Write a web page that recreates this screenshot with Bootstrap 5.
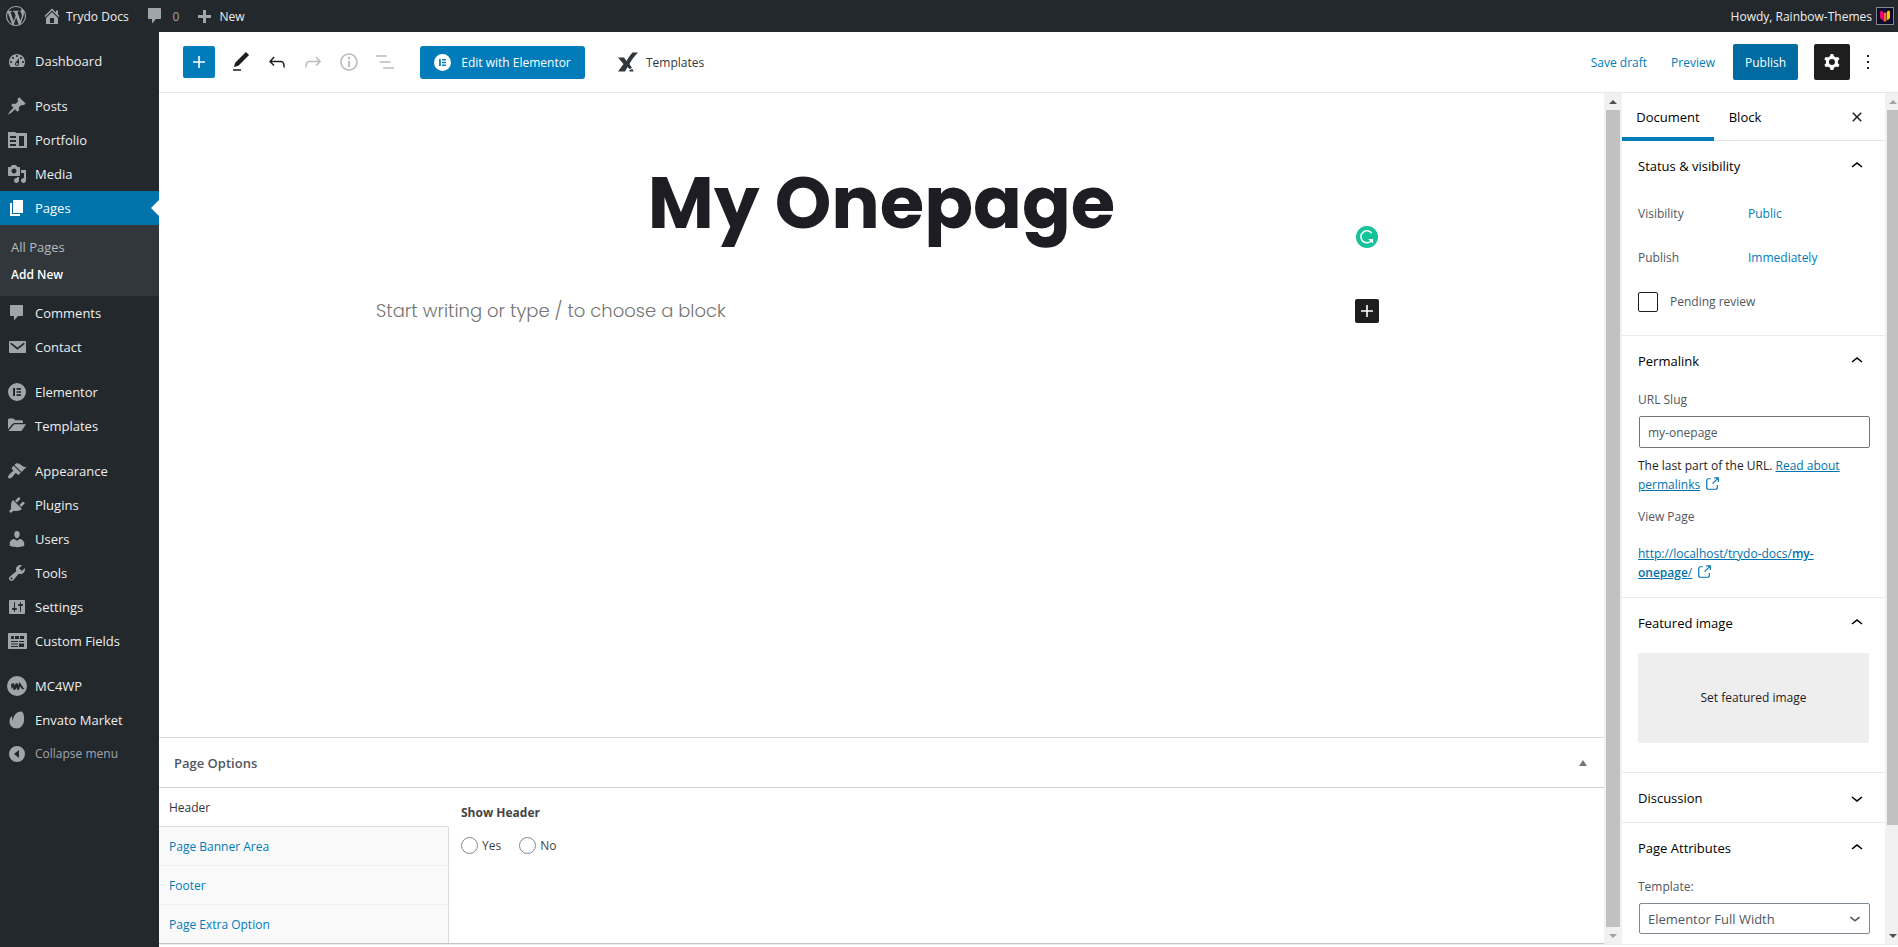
<!DOCTYPE html>
<html lang="en">
<head>
<meta charset="utf-8">
<meta name="viewport" content="width=device-width, initial-scale=1">
<title>Add New Page ‹ Trydo Docs — WordPress</title>
<link href="https://cdn.jsdelivr.net/npm/bootstrap@5.3.0/dist/css/bootstrap.min.css" rel="stylesheet">
<style>
  body { font-family: "Open Sans", "Noto Sans", sans-serif; font-size: 12px; line-height: 18px; color: #1e1e1e; background: #fff; }
  svg { display: block; flex: none; fill: currentColor; }
  a { color: #007cba; text-decoration: none; }
  button { font: inherit; }

  .adminbar { height: 32px; background: #23282d; color: #eee; padding: 0 4px 0 6px; }
  .adminbar a { color: #eee; }
  .adminbar svg { color: #a0a5aa; }
  .adminbar .count { color: #a0a5aa; }
  .adminbar .label, .topbar .label { padding-top: 2px; }
  .avatar { border: 1px solid #82878c; background: #0d0d2b; }

  .adminmenu { width: 159px; background: #23282d; padding-top: 12px; font-size: 13px; }
  .menu-link { display: flex; align-items: center; height: 34px; padding-left: 7px; gap: 8px; color: #eee; }
  .menu-link svg { color: #a0a5aa; }
  .menu-gap { margin-top: 11px; }
  .menu-link.current { background: #0073aa; color: #fff; position: relative; }
  .menu-link.current svg { color: #fff; }
  .menu-link.current::after { content: ""; position: absolute; right: 0; top: 9px; border: 8px solid transparent; border-left: 0; border-right-color: #fff; }
  .submenu { background: #32373c; padding: 8px 0 7px 11px; }
  .submenu a { display: block; line-height: 28px; color: #b4b9be; }
  .submenu a.current { color: #fff; font-weight: 600; font-size: 12px; }
  .collapse-btn { background: none; border: 0; width: 100%; color: #a0a5aa; font-size: 12px; }

  .topbar { height: 61px; border-bottom: 1px solid #e7e8e9; padding: 0 21px 0 24px; }
  .icon-btn { background: none; border: 0; padding: 0; width: 36px; height: 36px; display: flex; align-items: center; justify-content: center; color: #1e1e1e; }
  .icon-btn:disabled { color: #bbb; }
  .btn-flat { border: 0; border-radius: 2px; color: #fff; background: #007cba; display: flex; align-items: center; justify-content: center; }
  .inserter { width: 32px; height: 32px; padding: 0; }
  .elementor-btn { height: 33px; width: 165px; padding: 0; gap: 10px; border-radius: 3px; margin-left: 17px; }
  .templates-btn { background: none; border: 0; padding: 0; gap: 8px; color: #32373c; margin-left: 33px; }
  .text-btn { background: none; border: 0; padding: 0; color: #007cba; }
  .preview { margin-right: 18px; }
  .publish-btn { height: 36px; width: 65px; background: #006ba1; padding: 0; font-weight: 500; }
  .cog-btn { width: 36px; height: 36px; background: #1e1e1e; padding: 0; }
  .more-btn { width: 18px; margin-left: 9px; }

  .canvas-col { width: 1011px; max-width: 90%; padding-right: 8px; }
  .page-title { font-family: Poppins, Inter, sans-serif; font-weight: 700; font-size: 72px; line-height: 86px; color: #1f1d24; margin: 67px 0 0 8px; text-align: center; }
  .prompt-row { margin-top: 53px; height: 24px; }
  .prompt-text { font-family: Poppins, Inter, sans-serif; font-weight: 300; font-size: 18px; line-height: 24px; color: #757575; }
  .block-add { width: 24px; height: 24px; background: #1e1e1e; padding: 0; }
  .grammarly { position: absolute; right: 1px; bottom: -2px; }

  .metabox { border-top: 1px solid #d9dbdd; color: #444; }
  .metabox-head { height: 50px; padding: 0 16px 0 15px; border: 0 solid #ccd0d4; border-bottom-width: 1px; background: none; width: 100%; color: #50575e; font-size: 13px; font-weight: 600; }
  .metabox-body { border-bottom: 1px solid #c3c4c7; }
  .opt-tabs { width: 290px; background: #f9f9f9; }
  .opt-tabs a { display: block; padding: 11px 0 9px 10px; border-right: 1px solid #d9dbdd; border-bottom: 1px solid #eee; }
  .opt-tabs a:last-child { border-bottom: 0; }
  .opt-tabs a.on { color: #32373c; background: #fff; border-right-color: #fff; border-bottom-color: #d9dbdd; }
  .opts { padding: 16px 12px 0 12px; }
  .opt-choices { margin-top: 15px; }
  .opt-choice { gap: 4px; margin-right: 18px; }
  .opt-radio { appearance: none; width: 17px; height: 17px; border: 1px solid #7e8993; border-radius: 50%; margin: 0; background: #fff; }

  .scrollbar { background: #f1f1f1; padding: 0 2px; flex: none; display: flex; flex-direction: column; align-items: center; color: #505050; }
  .scrollbar .arrow { height: 17px; display: flex; align-items: center; }
  .scrollbar .thumb { background: #c1c1c1; width: 100%; }
  .bar-main { width: 18px; }
  .bar-side { width: 13px; padding-right: 0; }
  .side-thumb { flex: 0 0 84%; }
  .scrollbar .dim { color: #a3a3a3; }

  .inspector { width: 263px; overflow: hidden; }
  .tabs { height: 48px; border-bottom: 1px solid #e2e4e7; }
  .tab-btn { background: none; border: 0; padding: 0; height: 48px; width: 62px; font-size: 13px; }
  .tab-btn.on { border-bottom: 4px solid #007cba; border-top: 4px solid transparent; width: 92px; }
  .tab-close { margin: 0 10px 0 auto; }
  .panel { padding: 0 16px; border-bottom: 1px solid #e8eaec; }
  .panel-head { width: 100%; height: 49px; background: none; border: 0; padding: 0; font-size: 13px; }
  .prop { height: 44px; }
  .prop .k { width: 110px; }
  .check { appearance: none; width: 20px; height: 20px; border: 1px solid #1e1e1e; border-radius: 2px; margin: 0; }
  .grey { color: #50575e; }
  .field-label { margin: 6px 0 7px; }
  .field { width: 231px; border: 1px solid #757575; border-radius: 2px; padding: 0 8px; color: #50575e; background: #fff; margin-left: 1px; }
  .field-text { height: 32px; }
  .field-select { height: 31px; appearance: none; font-size: 13px; border-color: #7e8993; }
  .under { color: #0073aa; text-decoration: underline; }
  .help { line-height: 19px; margin-top: 8px; }
  .view-label { margin: 14px 0 19px; }
  .page-link-row { padding-right: 32px; }
  .ext { display: inline-block; vertical-align: -4px; color: #0073aa; }
  .feature { height: 90px; width: 231px; border: 0; border-radius: 2px; background: #eee; color: #1e1e1e; margin-top: 6px; }
  .sel-wrap { position: relative; }
  .sel-wrap svg { position: absolute; right: 3px; top: 4px; color: #50575e; pointer-events: none; }
  .status { padding-bottom: 11px; }
  .status .panel-head { margin-bottom: 2px; }
  .permalink { padding-bottom: 15px; }
  .featured { padding-bottom: 29px; }
  .base { height: 3px; border-top: 1px solid #e8eaec; }
</style>
</head>
<body>
<div class="d-flex flex-column vh-100 overflow-hidden">

  <header class="adminbar d-flex align-items-center justify-content-between flex-shrink-0">
    <div class="d-flex align-items-center">
      <a href="#" aria-label="About WordPress"><svg width="20" height="20" viewBox="0 0 20 20"><path d="M20 10c0-5.510-4.490-10-10-10C4.480 0 0 4.490 0 10c0 5.520 4.480 10 10 10 5.510 0 10-4.480 10-10zM7.780 15.370L4.370 6.220c.55-.02 1.170-.08 1.170-.08.5-.06.44-1.130-.06-1.110 0 0-1.450.11-2.370.11-.18 0-.37 0-.58-.01C4.120 2.690 6.870 1.110 10 1.110c2.330 0 4.450.87 6.050 2.340-.68-.11-1.650.39-1.650 1.580 0 .74.45 1.360.9 2.100.35.61.55 1.360.55 2.460 0 1.490-1.400 5-1.400 5l-3.030-8.370c.54-.02.82-.17.82-.17.5-.05.44-1.250-.06-1.220 0 0-1.440.12-2.380.12-.87 0-2.330-.12-2.330-.12-.5-.03-.56 1.200-.06 1.220l.92.08 1.260 3.410zM17.410 10c.24-.64.74-1.870.43-4.250.7 1.290 1.050 2.710 1.050 4.250 0 3.290-1.730 6.240-4.400 7.780.97-2.590 1.940-5.200 2.920-7.780zM6.100 18.090C3.120 16.650 1.110 13.530 1.110 10c0-1.300.23-2.480.72-3.590C3.250 10.300 4.670 14.200 6.100 18.090zm4.030-6.630l2.580 6.980c-.86.29-1.760.45-2.710.45-.79 0-1.570-.11-2.290-.33.81-2.380 1.620-4.740 2.420-7.100z"/></svg></a>
      <a href="#" class="d-flex align-items-center ms-3"><svg width="20" height="20" viewBox="0 0 20 20" class="me-1"><path fill-rule="evenodd" d="M16 8.500l1.530 1.530-1.060 1.060L10 4.600l-6.470 6.490-1.060-1.060L10 2.500l4 4v-2h2v4zm-6-2.460l6 5.990V18H4v-5.970zM12 17v-5H8v5h4z"/></svg><span class="label">Trydo Docs</span></a>
      <a href="#" class="d-flex align-items-center ms-3"><svg width="20" height="20" viewBox="0 0 20 20" class="me-1"><path d="M4 2h11c.6 0 1 .4 1 1v9c0 .6-.4 1-1 1h-4l-4 4.500V13H4c-.6 0-1-.4-1-1V3c0-.6.4-1 1-1z"/></svg><span class="count label ms-1">0</span></a>
      <a href="#" class="d-flex align-items-center ms-3"><svg width="20" height="20" viewBox="0 0 20 20" class="me-1"><path d="M17 9v3h-5v5H9v-5H4V9h5V4h3v5z" transform="translate(-1)"/></svg><span class="label">New</span></a>
    </div>
    <a href="#" class="d-flex align-items-center gap-1"><span class="label">Howdy, Rainbow-Themes</span>
      <svg class="avatar" width="18" height="18" viewBox="0 0 16 16"><path fill="#e6007e" d="M3 3.500l1.500-1 1.500 1V12l-1.500-.500L3 10z"/><path fill="#f37021" d="M6.500 5l1.500-.8 1.500.8v8L8 13.800 6.500 13z"/><path fill="#fdc300" d="M10 3.500l1.500-1 1.500 1V10l-1.500 1.500L10 12z"/></svg></a>
  </header>

  <div class="d-flex flex-grow-1 overflow-hidden">
    <nav class="adminmenu flex-shrink-0" aria-label="Main menu">
      <a href="#" class="menu-link"><svg width="20" height="20" viewBox="0 0 20 20"><path d="M3.760 16h12.480c1.100-1.370 1.760-3.110 1.760-5 0-4.420-3.580-8-8-8s-8 3.580-8 8c0 1.890.66 3.630 1.760 5zM10 4c.55 0 1 .45 1 1s-.45 1-1 1-1-.45-1-1 .45-1 1-1zM6 6c.55 0 1 .45 1 1s-.45 1-1 1-1-.45-1-1 .45-1 1-1zm8 0c.55 0 1 .45 1 1s-.45 1-1 1-1-.45-1-1 .45-1 1-1zm-5.370 5.550L12 7v6c0 1.100-.9 2-2 2s-2-.9-2-2c0-.57.24-1.080.63-1.450zM4 10c.55 0 1 .45 1 1s-.45 1-1 1-1-.45-1-1 .45-1 1-1zm12 0c.55 0 1 .45 1 1s-.45 1-1 1-1-.45-1-1 .45-1 1-1zm-5 3c0-.55-.45-1-1-1s-1 .45-1 1 .45 1 1 1 1-.45 1-1z"/></svg>Dashboard</a>
      <a href="#" class="menu-link menu-gap"><svg width="20" height="20" viewBox="0 0 20 20"><path d="M10.440 3.020l1.820-1.820 6.360 6.350-1.830 1.820c-1.050-.68-2.480-.57-3.410.36l-.75.75c-.92.93-1.040 2.350-.35 3.410l-1.830 1.820-2.410-2.410-2.800 2.790c-.42.42-3.380 2.710-3.800 2.290s1.860-3.390 2.280-3.810l2.790-2.790L4.100 9.360l1.830-1.820c1.050.69 2.480.57 3.400-.36l.75-.75c.93-.92 1.050-2.350.36-3.410z"/></svg>Posts</a>
      <a href="#" class="menu-link"><svg width="20" height="20" viewBox="0 0 20 20"><path fill-rule="evenodd" d="M1 2h7l1 1h11v15H1V2zm2 4v2h6V6H3zm0 4v2h6v-2H3zm0 4v2h6v-2H3zm9-8v10h5V6h-5z"/></svg>Portfolio</a>
      <a href="#" class="menu-link"><svg width="20" height="20" viewBox="0 0 20 20"><path d="M13 11V4c0-.55-.45-1-1-1h-1.670L9 1H5L3.670 3H2c-.55 0-1 .45-1 1v7c0 .55.45 1 1 1h10c.55 0 1-.45 1-1zM7 4.500c1.380 0 2.500 1.120 2.500 2.500S8.380 9.500 7 9.500 4.500 8.380 4.500 7 5.620 4.500 7 4.500zM14 6h5v10.500c0 1.380-1.120 2.500-2.500 2.500S14 17.880 14 16.500s1.120-2.500 2.500-2.500c.17 0 .34.02.5.05V9h-3V6zm-4 8.050V13h2v3.500c0 1.380-1.120 2.500-2.500 2.500S7 17.880 7 16.500 8.120 14 9.500 14c.17 0 .34.02.5.05z"/></svg>Media</a>
      <a href="#" class="menu-link current" aria-current="page"><svg width="20" height="20" viewBox="0 0 20 20"><path d="M6 15V2h10v13H6zm-1 1h8v2H3V5h2v11z"/></svg>Pages</a>
      <div class="submenu">
        <a href="#">All Pages</a>
        <a href="#" class="current">Add New</a>
      </div>
      <a href="#" class="menu-link"><svg width="20" height="20" viewBox="0 0 20 20"><path d="M4 2h11c.6 0 1 .4 1 1v9c0 .6-.4 1-1 1h-4l-4 4.500V13H4c-.6 0-1-.4-1-1V3c0-.6.4-1 1-1z"/></svg>Comments</a>
      <a href="#" class="menu-link"><svg width="20" height="20" viewBox="0 0 20 20"><path d="M3 4h15c.6 0 1 .4 1 1v10c0 .6-.4 1-1 1H3c-.6 0-1-.4-1-1V5c0-.6.4-1 1-1zm1 1.500L3.300 7l7.200 5.800L17.700 7 17 5.500l-6.500 5z" fill-rule="evenodd"/></svg>Contact</a>
      <a href="#" class="menu-link menu-gap"><svg width="20" height="20" viewBox="0 0 20 20"><path fill-rule="evenodd" d="M10 1a9 9 0 100 18 9 9 0 000-18zM6 6h2v8H6zm3.500 0H14v1.700H9.500zm0 3.150H14v1.700H9.500zm0 3.150H14V14H9.500z"/></svg>Elementor</a>
      <a href="#" class="menu-link"><svg width="20" height="20" viewBox="0 0 20 20"><path d="M1 4c0-1 .5-1.500 1.500-1.500H6c.6 0 1 .2 1.300.7L8 4.300h6.500c.8 0 1.500.6 1.500 1.400V7H8.500C6.900 7 6 7.500 5 8.500l-4 4.700zM1.500 15l4.800-5.800C6.900 8.500 7.500 8.200 8.500 8.200H19l-3.600 5.600c-.5.8-1.100 1.200-2 1.200z"/></svg>Templates</a>
      <a href="#" class="menu-link menu-gap"><svg width="20" height="20" viewBox="0 0 20 20"><path d="M14.480 11.060L7.410 3.990l1.500-1.500c.5-.56 2.300-.47 3.510.32 1.210.8 1.430 1.280 2.910 2.100 1.180.64 2.450 1.260 4.450.85zm-.71.71L6.700 4.700 4.930 6.470c-.39.39-.39 1.020 0 1.410l1.060 1.060c.39.39.39 1.030 0 1.420-.6.6-1.430 1.110-2.210 1.690-.35.26-.7.53-1.010.84C1.430 14.230.4 16.080 1.400 17.070c.99 1 2.840-.03 4.180-1.360.31-.31.58-.66.85-1.020.57-.78 1.080-1.610 1.690-2.210.39-.39 1.020-.39 1.410 0l1.060 1.060c.39.39 1.020.39 1.410 0z"/></svg>Appearance</a>
      <a href="#" class="menu-link"><svg width="20" height="20" viewBox="0 0 20 20"><path d="M13.110 4.360L9.870 7.600 8 5.730l3.240-3.240c.35-.34 1.050-.2 1.560.32.52.51.66 1.210.31 1.550zm-8 1.770l.91-1.120 9.010 9.010-1.190.84c-.71.71-2.630 1.160-3.820 1.160H6.140L4.900 17.260c-.59.59-1.540.59-2.120 0-.59-.58-.59-1.530 0-2.120l1.240-1.240v-3.880c0-1.130.4-3.190 1.090-3.890zm7.260 3.970l3.240-3.240c.34-.35 1.040-.21 1.550.31.52.51.66 1.210.31 1.550l-3.240 3.250z"/></svg>Plugins</a>
      <a href="#" class="menu-link"><svg width="20" height="20" viewBox="0 0 20 20"><path d="M10 9.250c-2.270 0-2.730-3.440-2.730-3.440C7 4.020 7.820 2 9.970 2c2.160 0 2.980 2.020 2.710 3.810 0 0-.41 3.440-2.680 3.440zm0 2.570L12.720 10c2.390 0 4.520 2.330 4.520 4.530v2.490s-3.650 1.130-7.240 1.130c-3.650 0-7.240-1.130-7.240-1.130v-2.490c0-2.250 1.940-4.480 4.470-4.480z"/></svg>Users</a>
      <a href="#" class="menu-link"><svg width="20" height="20" viewBox="0 0 20 20"><path d="M16.680 9.770c-1.340 1.340-3.300 1.670-4.950.99l-5.410 6.520c-.99.99-2.590.99-3.580 0s-.99-2.590 0-3.570l6.520-5.420c-.68-1.650-.35-3.610.99-4.950 1.280-1.280 3.120-1.620 4.720-1.060l-2.890 2.890 2.820 2.820 2.860-2.870c.53 1.580.18 3.390-1.080 4.650zM3.810 16.210c.4.39 1.040.39 1.430 0 .4-.4.4-1.040 0-1.430-.39-.4-1.030-.4-1.430 0-.39.39-.39 1.030 0 1.430z"/></svg>Tools</a>
      <a href="#" class="menu-link"><svg width="20" height="20" viewBox="0 0 20 20"><path d="M18 16V4c0-.55-.45-1-1-1H3c-.55 0-1 .45-1 1v12c0 .55.45 1 1 1h14c.55 0 1-.45 1-1zM8 11h1c.55 0 1 .45 1 1s-.45 1-1 1H8v1.500c0 .28-.22.5-.5.5s-.5-.22-.5-.5V13H6c-.55 0-1-.45-1-1s.45-1 1-1h1V5.500c0-.28.22-.5.5-.5s.5.22.5.5V11zm5-2h-1c-.55 0-1-.45-1-1s.45-1 1-1h1V5.500c0-.28.22-.5.5-.5s.5.22.5.5V7h1c.55 0 1 .45 1 1s-.45 1-1 1h-1v5.500c0 .28-.22.5-.5.5s-.5-.22-.5-.5V9z"/></svg>Settings</a>
      <a href="#" class="menu-link"><svg width="20" height="20" viewBox="0 0 20 20"><path fill-rule="evenodd" d="M2 2h17c.6 0 1 .4 1 1v14c0 .6-.4 1-1 1H2c-.6 0-1-.4-1-1V3c0-.6.400-1 1-1zm2 3v3h3V5zm4 0v3h4V5zm5 0v3h4V5zM4 10v1h7v-1zm0 2.500v1h7v-1zM4 15v1h7v-1zm8-5v1h5v-1zm0 2.500V16h5v-3.500z"/></svg>Custom Fields</a>
      <a href="#" class="menu-link menu-gap"><svg width="20" height="20" viewBox="0 0 20 20"><path d="M10 0a10 10 0 100 20 10 10 0 000-20zM4 8l3-1 .5 2.500L9 7l2 .5.3 2L12.500 6l5 7.500-2.500-.5-2-2.500-.8 3-2.200.5-.3-2.500L8 14l-2-.5-.2-2.500-1.300 2z" fill-rule="evenodd"/></svg>MC4WP</a>
      <a href="#" class="menu-link"><svg width="20" height="20" viewBox="0 0 20 20"><path d="M15 1.500c1.600 1.500 2.500 5.500 2 9.500-.6 4.500-3.500 7.500-7.300 7.500C5.500 18.500 2.500 15.500 2.500 11.500c0-2.500.9-4 2.200-5.200.3-.2.700 0 .6.400-.3 1.500 0 3 .6 4C6 6 9.500 1 15 1.500z"/></svg>Envato Market</a>
      <button type="button" class="menu-link collapse-btn"><svg width="20" height="20" viewBox="0 0 20 20"><path fill-rule="evenodd" d="M10 2a8 8 0 100 16 8 8 0 000-16zm2 4v8l-5-4z"/></svg>Collapse menu</button>
    </nav>

    <div class="d-flex flex-column flex-grow-1 overflow-hidden">
      <div class="topbar d-flex align-items-center justify-content-between flex-shrink-0">
        <div class="d-flex align-items-center">
          <button type="button" class="btn-flat inserter me-2" aria-label="Add block"><svg width="24" height="24" viewBox="0 0 24 24"><path d="M18 11.200h-5.200V6h-1.600v5.200H6v1.600h5.200V18h1.600v-5.200H18z"/></svg></button>
          <button type="button" class="icon-btn" aria-label="Edit"><svg width="24" height="24" viewBox="0 0 24 24"><path d="M20.100 5.100L16.900 2 6.200 12.700l-1.300 4.400 4.500-1.300L20.100 5.100zM4 20.800h8v-1.500H4v1.500z"/></svg></button>
          <button type="button" class="icon-btn" aria-label="Undo"><svg width="24" height="24" viewBox="0 0 24 24"><path d="M18.300 11.700c-.6-.6-1.400-.9-2.300-.9H6.700l2.900-3.300-1.100-1-4.500 5L8.500 16l1-1-2.700-2.700H16c.5 0 .9.2 1.300.5 1 1 1 3.400 1 4.500v.3h1.500v-.2c0-1.500 0-4.300-1.500-5.700z"/></svg></button>
          <button type="button" class="icon-btn" aria-label="Redo" disabled><svg width="24" height="24" viewBox="0 0 24 24"><path d="M15.600 6.500l-1.100 1 2.900 3.300H8c-.9 0-1.700.3-2.300.9-1.400 1.500-1.400 4.200-1.400 5.600v.2h1.500v-.3c0-1.100 0-3.500 1-4.500.3-.3.700-.5 1.300-.5h9.200L14.500 15l1.100 1.100 4.600-4.600-4.600-5z"/></svg></button>
          <button type="button" class="icon-btn" aria-label="Details" disabled><svg width="24" height="24" viewBox="0 0 24 24"><path fill-rule="evenodd" d="M12 3.200c-4.800 0-8.800 3.900-8.800 8.800 0 4.800 3.900 8.800 8.800 8.800 4.800 0 8.800-3.900 8.800-8.800 0-4.800-4-8.800-8.800-8.800zm0 16c-4 0-7.200-3.300-7.200-7.200C4.800 8 8 4.800 12 4.800s7.200 3.300 7.200 7.200c0 4-3.200 7.200-7.200 7.200zM11 17h2v-6h-2v6zm0-8h2V7h-2v2z"/></svg></button>
          <button type="button" class="icon-btn" aria-label="Outline" disabled><svg width="24" height="24" viewBox="0 0 24 24"><path d="M13.800 5.200H3v1.500h10.800V5.200zm-3.600 12v1.500H21v-1.500H10.200zm7.200-6H6.600v1.500h10.800v-1.500z"/></svg></button>
          <button type="button" class="btn-flat elementor-btn"><svg width="17" height="17" viewBox="0 0 20 20"><path fill-rule="evenodd" d="M10 0a10 10 0 100 20 10 10 0 000-20zM6 6h2v8H6zm3.500 0H14v1.700H9.500zm0 3.150H14v1.700H9.500zm0 3.150H14V14H9.500z"/></svg><span class="label">Edit with Elementor</span></button>
          <button type="button" class="templates-btn d-flex align-items-center"><svg width="20" height="20" viewBox="0 0 20 20"><path d="M0 5.500h6L8.500 9c2-3.500 4-6.500 6-8.500H20c-3.500 3.500-6.500 7.500-8.500 11.500l2.500 4-2.500 1L9.500 15 7 19.500H0L5.500 12zM11.500 18l3-1 1 2.500h-4z"/></svg><span class="label">Templates</span></button>
        </div>
        <div class="d-flex align-items-center">
          <button type="button" class="text-btn label me-4">Save draft</button>
          <button type="button" class="text-btn label preview">Preview</button>
          <button type="button" class="btn-flat publish-btn"><span class="label">Publish</span></button>
          <button type="button" class="btn-flat cog-btn ms-3" aria-label="Settings"><svg width="24" height="24" viewBox="0 0 24 24"><path fill-rule="evenodd" d="M10.289 4.836A1 1 0 0111.275 4h1.306a1 1 0 01.987.836l.244 1.466c.787.26 1.503.679 2.108 1.218l1.393-.522a1 1 0 011.216.437l.653 1.130a1 1 0 01-.23 1.273l-1.148.944a6.025 6.025 0 010 2.435l1.149.946a1 1 0 01.23 1.272l-.653 1.130a1 1 0 01-1.216.437l-1.394-.522c-.605.54-1.320.958-2.108 1.218l-.244 1.466a1 1 0 01-.987.836h-1.306a1 1 0 01-.986-.836l-.244-1.466a5.995 5.995 0 01-2.108-1.218l-1.394.522a1 1 0 01-1.217-.436l-.653-1.131a1 1 0 01.23-1.272l1.149-.946a6.026 6.026 0 010-2.435l-1.148-.944a1 1 0 01-.23-1.272l.653-1.131a1 1 0 011.217-.437l1.393.522a5.994 5.994 0 012.108-1.218l.244-1.466zM14.929 12a3 3 0 11-6 0 3 3 0 016 0z"/></svg></button>
          <button type="button" class="icon-btn more-btn" aria-label="Options"><svg width="24" height="24" viewBox="0 0 24 24"><path d="M11 5h2v2h-2zM11 11h2v2h-2zM11 17h2v2h-2z"/></svg></button>
        </div>
      </div>

      <div class="d-flex flex-grow-1 overflow-hidden">
        <main class="d-flex flex-column flex-grow-1">
          <div class="canvas-col mx-auto flex-grow-1">
            <div class="position-relative">
              <h1 class="page-title">My Onepage</h1>
              <svg class="grammarly" width="22" height="22" viewBox="0 0 22 22"><circle cx="11" cy="11" r="11" fill="#15c39a"/><path d="M15.800 7.300A6 6 0 1 0 15 15.200" fill="none" stroke="#fff" stroke-width="1.500"/><path d="M12 13h5v4.500l-1.600-1.600-1.200-1.200z" fill="#fff"/></svg>
            </div>
            <div class="prompt-row d-flex align-items-center justify-content-between">
              <span class="prompt-text">Start writing or type / to choose a block</span>
              <button type="button" class="btn-flat block-add" aria-label="Add block"><svg width="24" height="24" viewBox="0 0 24 24"><path d="M18 11.200h-5.200V6h-1.600v5.200H6v1.600h5.200V18h1.600v-5.200H18z"/></svg></button>
            </div>
          </div>

          <section class="metabox">
            <button type="button" class="metabox-head d-flex align-items-center justify-content-between">Page Options
              <svg width="10" height="6" viewBox="0 0 10 6"><path fill="#72777c" d="M5 0l4 6H1z"/></svg></button>
            <div class="metabox-body d-flex">
              <nav class="opt-tabs flex-shrink-0" aria-label="Page options">
                <a href="#" class="on">Header</a>
                <a href="#">Page Banner Area</a>
                <a href="#">Footer</a>
                <a href="#">Page Extra Option</a>
              </nav>
              <div class="opts">
                <div class="fw-bold" id="showHeader">Show Header</div>
                <div class="opt-choices d-flex" role="radiogroup" aria-labelledby="showHeader">
                  <div class="d-flex opt-choice"><input class="opt-radio" type="radio" name="sh" id="shYes"><label for="shYes">Yes</label></div>
                  <div class="d-flex opt-choice"><input class="opt-radio" type="radio" name="sh" id="shNo"><label for="shNo">No</label></div>
                </div>
              </div>
            </div>
          </section>
        </main>

        <div class="scrollbar bar-main" aria-hidden="true">
          <div class="arrow"><svg width="8" height="4" viewBox="0 0 8 4"><path d="M4 0l4 4H0z"/></svg></div>
          <div class="thumb flex-grow-1"></div>
          <div class="arrow dim"><svg width="8" height="4" viewBox="0 0 8 4"><path d="M0 0h8L4 4z"/></svg></div>
        </div>

        <aside class="inspector flex-shrink-0" aria-label="Document settings">
          <div class="tabs d-flex">
            <button type="button" class="tab-btn on">Document</button>
            <button type="button" class="tab-btn">Block</button>
            <button type="button" class="icon-btn tab-close align-self-center" aria-label="Close settings"><svg width="24" height="24" viewBox="0 0 24 24"><path d="M12 13.060l3.712 3.713 1.061-1.060L13.061 12l3.712-3.712-1.060-1.060L12 10.938 8.288 7.227l-1.061 1.060L10.939 12l-3.712 3.712 1.060 1.061L12 13.061z"/></svg></button>
          </div>

          <section class="panel status">
            <button type="button" class="panel-head d-flex align-items-center justify-content-between">Status &amp; visibility<svg width="24" height="24" viewBox="0 0 24 24"><path d="M6.500 12.400L12 8l5.500 4.400-.9 1.200L12 10l-4.500 3.600-1-1.200z"/></svg></button>
            <div class="prop d-flex align-items-center"><span class="k grey">Visibility</span><a href="#">Public</a></div>
            <div class="prop d-flex align-items-center"><span class="k grey">Publish</span><a href="#">Immediately</a></div>
            <div class="prop d-flex align-items-center"><input class="check" type="checkbox" id="pending"><label class="grey ps-2 ms-1" for="pending">Pending review</label></div>
          </section>

          <section class="panel permalink">
            <button type="button" class="panel-head d-flex align-items-center justify-content-between">Permalink<svg width="24" height="24" viewBox="0 0 24 24"><path d="M6.500 12.400L12 8l5.500 4.400-.9 1.200L12 10l-4.500 3.600-1-1.200z"/></svg></button>
            <label class="grey d-block field-label" for="slug">URL Slug</label>
            <input class="field field-text" id="slug" type="text" value="my-onepage">
            <div class="help">The last part of the URL. <a href="#" class="under">Read about permalinks</a> <svg class="ext" width="18" height="18" viewBox="0 0 24 24"><path d="M18.200 17c0 .7-.6 1.200-1.200 1.200H7c-.7 0-1.200-.6-1.200-1.200V7c0-.7.6-1.200 1.200-1.200h3.200V4.200H7C5.500 4.200 4.200 5.500 4.200 7v10c0 1.500 1.200 2.800 2.800 2.800h10c1.500 0 2.800-1.200 2.800-2.800v-3.600h-1.500V17zM14.900 3v1.500h3.700l-6.400 6.400 1.100 1.100 6.400-6.400v3.700h1.500V3h-6.300z"/></svg></div>
            <div class="view-label grey">View Page</div>
            <div class="page-link-row"><a href="#" class="under">http://localhost/trydo-docs/<span class="fw-semibold">my-onepage</span>/</a> <svg class="ext" width="18" height="18" viewBox="0 0 24 24"><path d="M18.200 17c0 .7-.6 1.200-1.200 1.200H7c-.7 0-1.200-.6-1.200-1.200V7c0-.7.6-1.200 1.200-1.200h3.200V4.200H7C5.500 4.200 4.200 5.500 4.200 7v10c0 1.500 1.200 2.800 2.800 2.800h10c1.500 0 2.800-1.200 2.800-2.800v-3.600h-1.500V17zM14.900 3v1.500h3.700l-6.400 6.400 1.100 1.100 6.400-6.400v3.700h1.500V3h-6.300z"/></svg></div>
          </section>

          <section class="panel featured">
            <button type="button" class="panel-head d-flex align-items-center justify-content-between">Featured image<svg width="24" height="24" viewBox="0 0 24 24"><path d="M6.500 12.400L12 8l5.500 4.400-.9 1.200L12 10l-4.500 3.600-1-1.200z"/></svg></button>
            <button type="button" class="feature">Set featured image</button>
          </section>

          <section class="panel">
            <button type="button" class="panel-head d-flex align-items-center justify-content-between">Discussion<svg width="24" height="24" viewBox="0 0 24 24"><path d="M17.500 11.600L12 16l-5.500-4.400.9-1.200L12 14l4.500-3.600 1 1.200z"/></svg></button>
          </section>

          <section class="panel">
            <button type="button" class="panel-head d-flex align-items-center justify-content-between">Page Attributes<svg width="24" height="24" viewBox="0 0 24 24"><path d="M6.500 12.400L12 8l5.500 4.400-.9 1.200L12 10l-4.500 3.600-1-1.200z"/></svg></button>
            <label class="grey d-block field-label" for="tpl">Template:</label>
            <div class="sel-wrap pb-3"><select class="field field-select" id="tpl"><option>Elementor Full Width</option></select><svg width="22" height="22" viewBox="0 0 24 24"><path d="M17.500 11.600L12 16l-5.500-4.400.9-1.200L12 14l4.500-3.600 1 1.200z"/></svg></div>
          </section>
        </aside>

        <div class="scrollbar bar-side" aria-hidden="true">
          <div class="arrow dim"><svg width="8" height="4" viewBox="0 0 8 4"><path d="M4 0l4 4H0z"/></svg></div>
          <div class="thumb side-thumb"></div>
          <div class="arrow mt-auto"><svg width="8" height="4" viewBox="0 0 8 4"><path d="M0 0h8L4 4z"/></svg></div>
        </div>
      </div>
      <div class="base flex-shrink-0"></div>
    </div>
  </div>
</div>
<script src="https://cdn.jsdelivr.net/npm/bootstrap@5.3.0/dist/js/bootstrap.bundle.min.js"></script>
</body>
</html>
